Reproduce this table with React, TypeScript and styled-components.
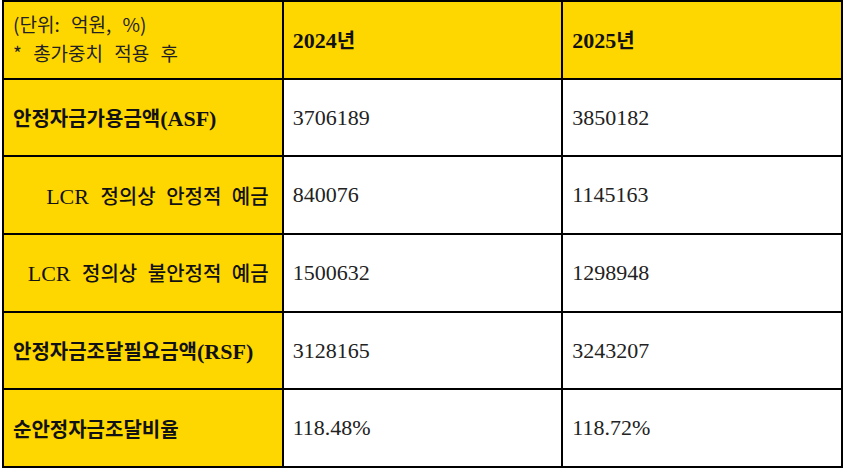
import styled, { createGlobalStyle } from "styled-components";

const GlobalStyle = createGlobalStyle`
  html, body {
    margin: 0;
    padding: 0;
    background: #ffffff;
  }
  body {
    font-family: "Liberation Serif", "Noto Sans CJK KR", serif;
    color: #111;
  }
`;

const YELLOW = "#ffd700";

const Page = styled.div`
  padding: 0 0 0 2px;
`;

const Table = styled.table`
  border-collapse: collapse;
  table-layout: fixed;
  width: 841px;
  height: 467px;
`;

const Row = styled.tr`
  height: 77.7px;
`;

const Cell = styled.td<{ $yellow?: boolean; $align?: "left" | "right" }>`
  border: 2px solid #000;
  background: ${({ $yellow }) => ($yellow ? YELLOW : "#fff")};
  text-align: ${({ $align }) => $align ?? "left"};
  vertical-align: middle;
  padding: 0 13px 0 9px;
  font-family: "Liberation Serif", "Noto Sans CJK KR", serif;
  font-size: 22px;
  color: #222;
  white-space: nowrap;
`;

const UnitNote = styled.div`
  font-family: "Noto Sans CJK KR", sans-serif;
  font-size: 19px;
  line-height: 32px;
  word-spacing: 7px;
  color: #222;
  margin-top: -3px;
`;

const YearLabel = styled.span`
  font-weight: 700;
  color: #111;
`;

const RowLabel = styled.span<{ $sub?: boolean }>`
  font-weight: ${({ $sub }) => ($sub ? 500 : 700)};
  color: #111;
  word-spacing: ${({ $sub }) => ($sub ? "6px" : "0")};
`;

const Hangul = styled.span`
  font-family: "Noto Sans CJK KR", sans-serif;
  font-size: 20px;
`;

type DataRow = {
  label: string;
  latin?: string;
  sub?: boolean;
  y2024: string;
  y2025: string;
};

const rows: DataRow[] = [
  { label: "안정자금가용금액", latin: "(ASF)", y2024: "3706189", y2025: "3850182" },
  { label: "LCR 정의상 안정적 예금", sub: true, y2024: "840076", y2025: "1145163" },
  { label: "LCR 정의상 불안정적 예금", sub: true, y2024: "1500632", y2025: "1298948" },
  { label: "안정자금조달필요금액", latin: "(RSF)", y2024: "3128165", y2025: "3243207" },
  { label: "순안정자금조달비율", y2024: "118.48%", y2025: "118.72%" },
];

const renderLabel = (r: DataRow) => {
  if (r.sub) {
    const [lcr, ...rest] = r.label.split(" ");
    return (
      <RowLabel $sub>
        {lcr} <Hangul>{rest.join(" ")}</Hangul>
      </RowLabel>
    );
  }
  return (
    <RowLabel>
      <Hangul>{r.label}</Hangul>
      {r.latin}
    </RowLabel>
  );
};

export default function App() {
  return (
    <Page>
      <GlobalStyle />
      <Table>
        <tbody>
          <Row>
            <Cell $yellow>
              <UnitNote>(단위: 억원, %)</UnitNote>
              <UnitNote>* 총가중치 적용 후</UnitNote>
            </Cell>
            <Cell $yellow>
              <YearLabel>
                2024<Hangul>년</Hangul>
              </YearLabel>
            </Cell>
            <Cell $yellow>
              <YearLabel>
                2025<Hangul>년</Hangul>
              </YearLabel>
            </Cell>
          </Row>
          {rows.map((r) => (
            <Row key={r.label}>
              <Cell $yellow $align={r.sub ? "right" : "left"}>
                {renderLabel(r)}
              </Cell>
              <Cell>{r.y2024}</Cell>
              <Cell>{r.y2025}</Cell>
            </Row>
          ))}
        </tbody>
      </Table>
    </Page>
  );
}
